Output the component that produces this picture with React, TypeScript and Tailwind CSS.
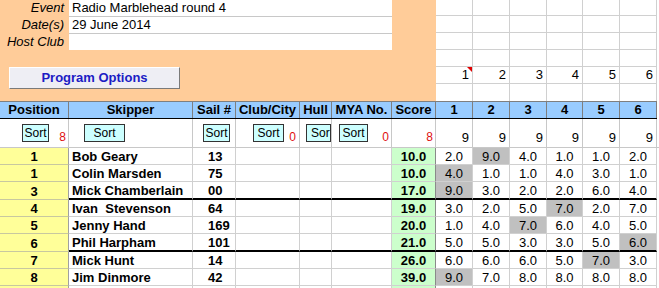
import React from 'react';

type Result = {
  pos: string;
  name: string;
  sail: string;
  score: string;
  races: string[];
  discard: number; // index of the dropped race, shaded grey
  split?: boolean; // heavy rule under this row
};

const results: Result[] = [
  { pos: '1', name: 'Bob Geary', sail: '13', score: '10.0', races: ['2.0', '9.0', '4.0', '1.0', '1.0', '2.0'], discard: 1 },
  { pos: '1', name: 'Colin Marsden', sail: '75', score: '10.0', races: ['4.0', '1.0', '1.0', '4.0', '3.0', '1.0'], discard: 0 },
  { pos: '3', name: 'Mick Chamberlain', sail: '00', score: '17.0', races: ['9.0', '3.0', '2.0', '2.0', '6.0', '4.0'], discard: 0, split: true },
  { pos: '4', name: 'Ivan  Stevenson', sail: '64', score: '19.0', races: ['3.0', '2.0', '5.0', '7.0', '2.0', '7.0'], discard: 3 },
  { pos: '5', name: 'Jenny Hand', sail: '169', score: '20.0', races: ['1.0', '4.0', '7.0', '6.0', '4.0', '5.0'], discard: 2 },
  { pos: '6', name: 'Phil Harpham', sail: '101', score: '21.0', races: ['5.0', '5.0', '3.0', '3.0', '5.0', '6.0'], discard: 5, split: true },
  { pos: '7', name: 'Mick Hunt', sail: '14', score: '26.0', races: ['6.0', '6.0', '6.0', '5.0', '7.0', '3.0'], discard: 4 },
  { pos: '8', name: 'Jim Dinmore', sail: '42', score: '39.0', races: ['9.0', '7.0', '8.0', '8.0', '8.0', '8.0'], discard: 0 },
];

const headings = ['Position', 'Skipper', 'Sail #', 'Club/City', 'Hull', 'MYA No.', 'Score', '1', '2', '3', '4', '5', '6'];

const cols = 'grid grid-cols-[69px_124px_43px_64px_32px_60px_44px_37px_37px_37px_36px_37px_37px]';
const raceCols = 'grid grid-cols-[37px_37px_37px_36px_37px_37px]';

const SortButton: React.FC<{ className?: string; label?: string }> = ({ className = '', label = 'Sort' }) => (
  <button
    type="button"
    className={`mt-[5px] h-[18px] shrink-0 self-start border border-[#333] bg-[#ccffff] text-[12px] leading-[16px] ${className}`}
  >
    {label}
  </button>
);

const Count: React.FC<{ value: string }> = ({ value }) => (
  <span className="ml-auto self-end mb-[2px] text-[12px] leading-[15px] text-[#e01010]">{value}</span>
);

const App: React.FC = () => {
  return (
    <div className="w-[659px] h-[288px] overflow-hidden bg-white text-[13px] text-black font-['Liberation_Sans',Arial,sans-serif]">
      {/* event details + race number strip */}
      <div className="flex h-[101px]">
        <div className="w-[436px] bg-[#ffcc99] flex flex-col">
          <div className="flex h-[17px]">
            <div className="w-[69px] pr-[5px] text-right italic leading-[16px]">Event</div>
            <div className="w-[323px] bg-white border-b border-[#c8c8c8] pl-[3px] leading-[16px]">Radio Marblehead round 4</div>
          </div>
          <div className="flex h-[17px]">
            <div className="w-[69px] pr-[5px] text-right italic leading-[16px]">Date(s)</div>
            <div className="w-[323px] bg-white border-b border-[#c8c8c8] pl-[3px] leading-[16px]">29 June 2014</div>
          </div>
          <div className="flex h-[16px]">
            <div className="w-[69px] pr-[5px] text-right italic leading-[16px]">Host Club</div>
            <div className="w-[323px] bg-white" />
          </div>
          <button
            type="button"
            className="mt-[17px] ml-[9px] w-[171px] h-[22px] bg-[#eeeef4] border border-t-white border-l-white border-r-[#7a7a7a] border-b-[#7a7a7a] font-bold text-[13px] text-[#1c1cc4] leading-[18px]"
          >
            Program Options
          </button>
        </div>
        <div className="flex flex-col w-[223px]">
          {[16, 17, 17, 17, 17, 17].map((h, r) => (
            <div key={r} className={`${raceCols} ${h === 16 ? 'h-[16px]' : 'h-[17px]'}`}>
              {[1, 2, 3, 4, 5, 6].map((n) => (
                <div
                  key={n}
                  className={`relative border-r border-[#d0d0d0] text-right pr-[3px] leading-[16px] ${r < 5 ? 'border-b' : ''}`}
                >
                  {r === 4 ? n : ''}
                  {r === 4 && n === 1 && (
                    <svg className="absolute right-0 top-0" width="5" height="5" viewBox="0 0 5 5">
                      <polygon points="0,0 5,0 5,5" fill="#e00000" />
                    </svg>
                  )}
                </div>
              ))}
            </div>
          ))}
        </div>
      </div>

      {/* column headings */}
      <div className={`${cols} w-[657px] h-[18px] bg-[#99ccff] border-t border-b border-t-[#7f7f7f] border-b-black`}>
        {headings.map((h) => (
          <div key={h} className="flex items-center justify-center border-r border-[#7f7f7f] font-bold leading-[16px]">
            {h}
          </div>
        ))}
      </div>

      {/* sort buttons and counts */}
      <div className={`${cols} h-[29px] border-b border-[#c8c8c8]`}>
        <div className="flex border-r border-[#c8c8c8] pr-[2px]">
          <SortButton className="ml-[22px] w-[27px]" />
          <Count value="8" />
        </div>
        <div className="flex border-r border-[#c8c8c8]">
          <SortButton className="ml-[15px] w-[41px]" />
        </div>
        <div className="flex border-r border-[#c8c8c8]">
          <SortButton className="ml-[10px] w-[27px]" />
        </div>
        <div className="flex border-r border-[#c8c8c8] pr-[3px]">
          <SortButton className="ml-[17px] w-[31px]" />
          <Count value="0" />
        </div>
        <div className="flex border-r border-[#c8c8c8]">
          {/* the narrow Hull column only fits part of the caption */}
          <SortButton className="ml-[6px] w-[25px] text-left pl-[4px]" label="Sor" />
        </div>
        <div className="flex border-r border-[#c8c8c8] pr-[2px]">
          <SortButton className="ml-[7px] w-[29px]" />
          <Count value="0" />
        </div>
        <div className="flex border-r border-[#c8c8c8] pr-[2px]">
          <Count value="8" />
        </div>
        {[1, 2, 3, 4, 5, 6].map((n) => (
          <div key={n} className="flex justify-end items-end border-r border-[#c8c8c8] pr-[3px] pb-[2px] leading-[15px]">
            9
          </div>
        ))}
      </div>

      {/* results */}
      {results.map((r, i) => {
        const rule = r.split ? 'border-b-2 border-b-black' : 'border-b border-b-[#d0d0d0]';
        return (
          <div key={i} className={`${cols} ${r.split ? 'h-[18px]' : 'h-[17px]'}`}>
            <div className="flex items-end justify-center bg-[#ffff99] border-r border-[#a0a0a0] border-b border-b-[#c8c8a0] font-bold leading-[15px]">
              {r.pos}
            </div>
            <div className={`flex items-end pl-[3px] border-r border-[#d0d0d0] ${rule} font-bold leading-[15px] whitespace-pre`}>
              {r.name}
            </div>
            <div className={`flex items-end pl-[15px] border-r border-[#d0d0d0] ${rule} font-bold leading-[15px]`}>
              {r.sail}
            </div>
            <div className={`border-r border-[#d0d0d0] ${rule}`} />
            <div className={`border-r border-[#d0d0d0] ${rule}`} />
            <div className={`border-r border-[#d0d0d0] ${rule}`} />
            <div className={`flex items-end justify-center bg-[#ccffcc] border-r border-[#8a8a8a] ${rule} font-bold leading-[15px]`}>
              {r.score}
            </div>
            {r.races.map((v, k) => (
              <div
                key={k}
                className={`flex items-end justify-center border-r border-[#d0d0d0] ${rule} leading-[15px] ${k === r.discard ? 'bg-[#c0c0c0]' : ''}`}
              >
                {v}
              </div>
            ))}
          </div>
        );
      })}

      {/* next empty row */}
      <div className={`${cols} h-[17px]`}>
        <div className="bg-[#ffff99] border-r border-[#a0a0a0]" />
        {[...Array(5)].map((_, k) => (
          <div key={k} className="border-r border-[#d0d0d0]" />
        ))}
        <div className="bg-[#ccffcc] border-r border-[#8a8a8a]" />
        {[...Array(6)].map((_, k) => (
          <div key={k} className="border-r border-[#d0d0d0]" />
        ))}
      </div>
    </div>
  );
};

export default App;
